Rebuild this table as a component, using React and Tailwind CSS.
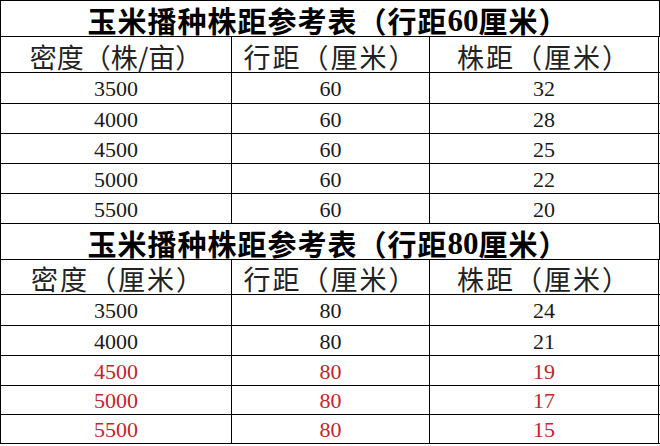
import React from "react";

const tables = [
  {
    title: "60",
    header: "密度（株/亩）",
    headerCls: "tracking-[0px]",
    rows: [
      { d: "3500", r: "60", z: "32", h: "h-[31px]" },
      { d: "4000", r: "60", z: "28", h: "h-[30px]" },
      { d: "4500", r: "60", z: "25", h: "h-[30px]" },
      { d: "5000", r: "60", z: "22", h: "h-[30px]" },
      { d: "5500", r: "60", z: "20", h: "h-[30px]" },
    ],
    headH: "h-[36px]",
  },
  {
    title: "80",
    header: "密度（厘米）",
    headerCls: "tracking-[2px] pl-[4px]",
    rows: [
      { d: "3500", r: "80", z: "24", h: "h-[31px]" },
      { d: "4000", r: "80", z: "21", h: "h-[30px]" },
      { d: "4500", r: "80", z: "19", h: "h-[30px]", red: true },
      { d: "5000", r: "80", z: "17", h: "h-[29px]", red: true },
      { d: "5500", r: "80", z: "15", h: "h-[29px]", red: true },
    ],
    headH: "h-[35px]",
  },
];

const serif = "font-['Liberation_Serif','Noto_Sans_CJK_SC',serif]";
const cjk = "font-['Noto_Sans_CJK_SC',sans-serif]";

const App = () => {
  return (
    <div className="w-[660px] h-[446px] bg-white text-black">
      <div className="w-[660px] border-l border-t border-black">
        {tables.map((t, ti) => (
          <div key={ti}>
            {/* title row */}
            <div className="flex h-[36px] border-b border-black">
              <div
                className={`w-[659px] border-r border-black flex items-center justify-center pt-[3px] pr-[4px] text-[29px] tracking-[1px] font-bold leading-none ${cjk}`}
              >
                玉米播种株距参考表（行距
                <span className={`${serif} text-[31px] font-bold tracking-normal`}>{t.title}</span>
                厘米）
              </div>
            </div>
            {/* header row */}
            <div
              className={`flex ${t.headH} border-b border-black text-[27px] tracking-[2px] leading-none text-[#222] ${cjk}`}
            >
              <div
                className={`w-[231px] border-r border-black flex items-center justify-center pt-[3px] ${t.headerCls}`}
              >
                {t.header}
              </div>
              <div className="w-[198px] border-r border-black flex items-center justify-center pt-[3px]">
                行距（厘米）
              </div>
              <div className="w-[229px] border-r border-black flex items-center justify-center pt-[3px]">
                株距（厘米）
              </div>
            </div>
            {/* data rows */}
            {t.rows.map((row, i) => (
              <div
                key={i}
                className={`flex ${row.h} border-b border-black text-[22px] leading-none ${serif} ${
                  row.red ? "text-[#c4242c]" : "text-[#1a1a1a]"
                }`}
              >
                <div className="w-[231px] border-r border-black flex items-center justify-center pt-[2px]">
                  {row.d}
                </div>
                <div className="w-[198px] border-r border-black flex items-center justify-center pt-[2px]">
                  {row.r}
                </div>
                <div className="w-[229px] border-r border-black flex items-center justify-center pt-[2px]">
                  {row.z}
                </div>
              </div>
            ))}
          </div>
        ))}
      </div>
    </div>
  );
};

export default App;
